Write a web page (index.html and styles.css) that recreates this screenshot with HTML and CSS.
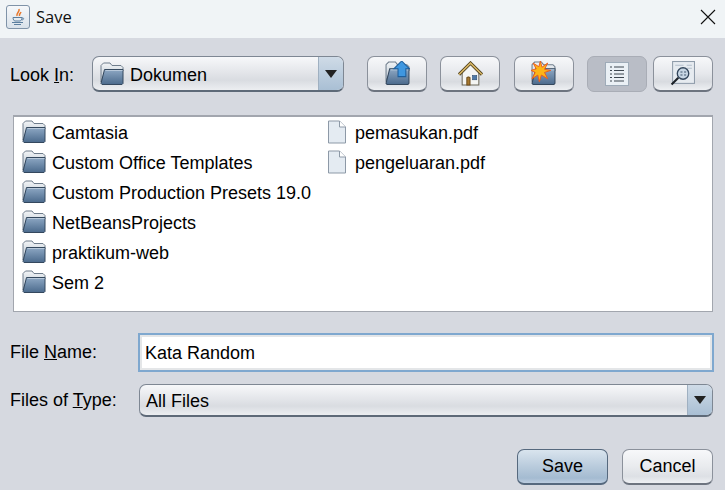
FILE: index.html
```html
<!DOCTYPE html>
<html lang="id">
<head>
  <meta charset="UTF-8">
  <title>Save</title>
  <link rel="stylesheet" href="styles.css">
</head>
<body>
<svg class="defs" width="0" height="0">
  <defs>
    <linearGradient id="folderFill" x1="0" y1="0" x2="0" y2="1">
      <stop offset="0" stop-color="#8ea8c4"/>
      <stop offset="1" stop-color="#4b6a8c"/>
    </linearGradient>
    <linearGradient id="tabFill" x1="0" y1="0" x2="0" y2="1">
      <stop offset="0" stop-color="#f2f4f6"/>
      <stop offset="1" stop-color="#b4c0cc"/>
    </linearGradient>
    <symbol id="folder" viewBox="0 0 24 24">
      <path d="M1 20V3.500L3.500 1h6.500l2 2.500h9L23 5.500V9H5z" fill="url(#tabFill)" stroke="#6f7d8c"/>
      <path d="M1 21.500 4.500 7.500h18.500v14L22 22.500H2z" fill="url(#folderFill)" stroke="#34485e"/>
      <path d="M5.500 8.500h17" stroke="#b7c8da" fill="none"/>
    </symbol>
    <symbol id="file" viewBox="0 0 20 24">
      <path d="M1.500 1h11l6 6v16h-17z" fill="#e4ebf2" stroke="#8d99a7"/>
      <path d="M12.500 1v6h6" fill="#fff" stroke="#8d99a7"/>
    </symbol>
  </defs>
</svg>

<header class="titlebar">
  <span class="app-icon">
    <svg width="16" height="18" viewBox="0 0 16 18">
      <path d="M9 1C10 4 6 5 7 8M11 4C10 6 9 6 9.500 8" fill="none" stroke="#e8772a" stroke-width="1.500"/>
      <path d="M3 9.500h9c0 2-1 3.500-2 3.500H5C4 13 3 11.500 3 9.500zM12 10c2-.5 2.500 1.500 0 2M2 14.500h11M4 16.500h7" fill="none" stroke="#5b7f9f"/>
    </svg>
  </span>
  <span class="title">Save</span>
  <svg class="close" width="16" height="16" viewBox="0 0 16 16">
    <path d="M1 1l14 14M15 1L1 15" stroke="#111" stroke-width="1.100"/>
  </svg>
</header>

<main class="dialog">
  <div class="toolbar">
    <label class="look-label">Look <u>I</u>n:</label>
    <div class="combo combo-look">
      <div class="combo-value">
        <svg class="icon-combo" width="24" height="24"><use href="#folder"/></svg>
        <span>Dokumen</span>
      </div>
      <div class="combo-arrow"><i></i></div>
    </div>
    <button class="tool tool-first">
      <svg width="25" height="25" viewBox="0 0 24 24">
        <use href="#folder"/>
        <path d="M16 0l7.500 7.500H20V15h-7.500V7.500H8.500z" fill="#3f97e0" stroke="#1f5f9c"/>
      </svg>
    </button>
    <button class="tool">
      <svg width="25" height="25" viewBox="0 0 24 24">
        <path d="M4 11v12h16V11L12 3z" fill="#f4f5f3" stroke="#6d6a5c"/>
        <path d="M1 13 12 2l11 11" fill="none" stroke="#4d3f1c" stroke-width="3"/>
        <path d="M1 13 12 2l11 11" fill="none" stroke="#d9b765" stroke-width="1.500"/>
        <path d="M8.500 23v-7a2 2 0 0 1 3 0v7z" fill="#a8782e" stroke="#6e4d1c"/>
        <rect x="14" y="14" width="4" height="4" fill="#4f7aa8" stroke="#2e4f75" stroke-width=".6"/>
      </svg>
    </button>
    <button class="tool">
      <svg width="25" height="25" viewBox="0 0 24 24">
        <use href="#folder"/>
        <path d="M9 0l1.500 6L16 2l-3 6 6 1-6 2 3 6-6-3.500L8 20l-1.500-6.500L1 17l3-6-4-2 5-1.500L2 2l5.500 3.500z" fill="#fdb515" stroke="#ea5a1d" stroke-width=".9"/>
      </svg>
    </button>
    <button class="tool tool-on">
      <svg width="24" height="24" viewBox="0 0 24 24">
        <rect x=".5" y=".5" width="23" height="23" fill="#eaf0f5" stroke="#9eabb8"/>
        <path d="M5 5h2M9 5h10M5 8.500h2M9 8.500h10M5 12h2M9 12h10M5 15.500h2M9 15.500h10M5 19h2M9 19h10" stroke="#3d4650" stroke-width="1.200"/>
      </svg>
    </button>
    <button class="tool tool-last">
      <svg width="25" height="25" viewBox="0 0 24 24">
        <rect x="2.500" y=".5" width="21" height="21" fill="#e6ebf0" stroke="#8f9caa"/>
        <path d="M5 4h8M16 4h5M16 7h5" stroke="#b4bfca"/>
        <circle cx="12.500" cy="12" r="5.500" fill="#c7d6e4" stroke="#34475c" stroke-width="1.300"/>
        <path d="M10 10.500h2M13.500 10.500h2M10 13.500h2M13.500 13.500h2" stroke="#41566c"/>
        <path d="M8 16 1.500 22.500" stroke="#1d2228" stroke-width="2"/>
      </svg>
    </button>
  </div>

  <div class="file-list">
    <ul class="file-col file-col-dirs">
      <li><svg class="icon-folder" width="24" height="24"><use href="#folder"/></svg>Camtasia</li>
      <li><svg class="icon-folder" width="24" height="24"><use href="#folder"/></svg>Custom Office Templates</li>
      <li><svg class="icon-folder" width="24" height="24"><use href="#folder"/></svg>Custom Production Presets 19.0</li>
      <li><svg class="icon-folder" width="24" height="24"><use href="#folder"/></svg>NetBeansProjects</li>
      <li><svg class="icon-folder" width="24" height="24"><use href="#folder"/></svg>praktikum-web</li>
      <li><svg class="icon-folder" width="24" height="24"><use href="#folder"/></svg>Sem 2</li>
    </ul>
    <ul class="file-col">
      <li><svg class="icon-file" width="20" height="24"><use href="#file"/></svg>pemasukan.pdf</li>
      <li><svg class="icon-file" width="20" height="24"><use href="#file"/></svg>pengeluaran.pdf</li>
    </ul>
  </div>

  <div class="form-row row-name">
    <label class="form-label">File <u>N</u>ame:</label>
    <input class="name-input" type="text" value="Kata Random">
  </div>
  <div class="form-row row-type">
    <label class="form-label">Files of <u>T</u>ype:</label>
    <div class="combo combo-type">
      <div class="combo-value">All Files</div>
      <div class="combo-arrow"><i></i></div>
    </div>
  </div>

  <div class="actions">
    <button class="action action-default">Save</button>
    <button class="action">Cancel</button>
  </div>
</main>
</body>
</html>
```

FILE: styles.css
```css
* {
  box-sizing: border-box;
}
html, body {
  margin: 0;
  height: 490px;
  overflow: hidden;
}
body {
  font-family: "Liberation Sans", Arial, sans-serif;
  font-size: 18px;
  color: #000;
  background: #d6d9e0;
}
.defs {
  position: absolute;
}
.titlebar {
  display: flex;
  align-items: center;
  height: 38px;
  background: #f0f4f6;
  padding: 0 9px 5px 6px;
}
.app-icon {
  display: flex;
  align-items: center;
  justify-content: center;
  width: 24px;
  height: 24px;
  background: linear-gradient(#f6f8fa, #d9e2ea);
  border: 1px solid #7f93a8;
  border-radius: 3px;
}
.title {
  margin-left: 6px;
  font-family: "Open Sans", sans-serif;
  font-size: 16.500px;
  color: #111;
}
.close {
  margin-left: auto;
}
.dialog {
  padding: 18px 11px 0 10px;
}
.toolbar {
  display: flex;
  align-items: center;
  height: 36px;
}
.look-label {
  flex: none;
  width: 82px;
  padding-top: 3px;
}
.combo {
  display: flex;
  flex: none;
  background: linear-gradient(#f7f8fa 0%, #e4e6ea 45%, #d9dce1 70%, #eceef1 100%);
  border: 1px solid #7e8793;
  border-bottom: 2px solid #5e6a78;
  border-radius: 7px;
  overflow: hidden;
}
.combo-look {
  width: 252px;
  height: 36px;
}
.combo-value {
  flex: 1;
  display: flex;
  align-items: center;
  padding: 2px 0 0 6px;
}
.combo-look .combo-value {
  padding: 4px 0 0 7px;
}
.icon-combo {
  flex: none;
  margin: -4px 6px 0 0;
}
.combo-arrow {
  display: flex;
  align-items: center;
  justify-content: center;
  width: 25px;
  background: linear-gradient(#cfdbe7, #a9bfd4);
  border-left: 1px solid #9fb0c1;
}
.combo-arrow i {
  width: 0;
  height: 0;
  border-left: 6px solid transparent;
  border-right: 6px solid transparent;
  border-top: 8px solid #222;
}
.tool {
  display: flex;
  flex: none;
  align-items: center;
  justify-content: center;
  width: 60px;
  height: 36px;
  margin-left: 13.330px;
  padding: 0;
  background: linear-gradient(#f7f8fa 0%, #e6e8ec 50%, #d8dbe0 75%, #eef0f3 100%);
  border: 1px solid #8b919b;
  border-bottom: 2px solid #6d747f;
  border-radius: 7px;
}
.tool-first {
  margin-left: 23px;
}
.tool-on {
  background: #b9bdc6;
  border: 1px solid #a9adb6;
}
.tool-last {
  margin-left: 6px;
}
.file-list {
  display: flex;
  height: 197px;
  margin: 23px 1px 0 3px;
  padding: 1px 0 0 8px;
  background: #fff;
  border: 1px solid #a2a6ae;
  border-top-width: 2px;
}
.file-col {
  margin: 0;
  padding: 0;
  list-style: none;
}
.file-col-dirs {
  width: 305px;
}
.file-col li {
  display: flex;
  align-items: center;
  height: 30px;
  white-space: nowrap;
}
.icon-folder {
  flex: none;
  margin: 0 6px 2px 0;
}
.icon-file {
  flex: none;
  margin: 0 8px 2px 0;
}
.form-row {
  display: flex;
  align-items: center;
}
.form-label {
  width: 128px;
  flex: none;
}
.row-name {
  margin-top: 21px;
}
.name-input {
  flex: none;
  width: 576px;
  height: 39px;
  padding: 1px 5px 0;
  font: inherit;
  color: #000;
  background: #fff;
  border: 2px solid #7fa8cf;
  outline: none;
  box-shadow: inset 0 0 0 2px #e4e6e8;
}
.row-type {
  margin-top: 12px;
}
.combo-type {
  width: 574px;
  height: 33px;
  margin-left: 1px;
}
.actions {
  display: flex;
  justify-content: flex-end;
  gap: 14px;
  margin-top: 32px;
  padding-right: 1px;
}
.action {
  width: 91px;
  height: 36px;
  padding: 0;
  font: inherit;
  color: #000;
  background: linear-gradient(#f7f8fa 0%, #e9ebee 50%, #dde0e5 80%, #eef0f3 100%);
  border: 1px solid #8b919b;
  border-bottom: 2px solid #6d747f;
  border-radius: 7px;
}
.action-default {
  background: linear-gradient(#d9e4ee 0%, #b9cbdc 50%, #a4bbd1 85%, #bccde0 100%);
  border-color: #56697e;
}
```
